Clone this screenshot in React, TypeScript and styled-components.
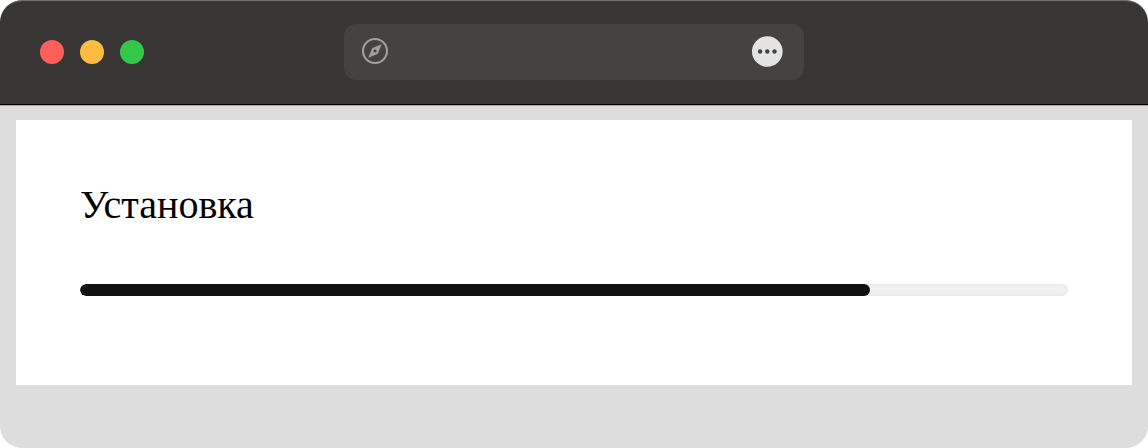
import React from "react";
import styled, { createGlobalStyle } from "styled-components";

const GlobalStyle = createGlobalStyle`
  * { box-sizing: border-box; }
  body { margin: 0; background: #fff; }
`;

const Window = styled.div`
  min-height: 100vh;
  border-radius: 22px;
  overflow: hidden;
  background: #ddd;
`;

const TitleBar = styled.header`
  display: grid;
  grid-template-columns: 1fr minmax(0, 460px) 1fr;
  align-items: center;
  padding: 24px 40px;
  background: #373634;
  border-bottom: 1px solid #000;
  border-radius: 22px 22px 0 0;
  box-shadow: inset 0 2px 1px -1px #777674, 0 1px 0 #aaa;
`;

const WindowControls = styled.div`
  display: flex;
  gap: 16px;
`;

const ControlButton = styled.button<{ $color: string }>`
  width: 24px;
  height: 24px;
  padding: 0;
  border: 0;
  border-radius: 50%;
  background: ${({ $color }) => $color};
`;

const AddressBar = styled.div`
  display: flex;
  align-items: center;
  height: 56px;
  padding: 0 21px 0 17px;
  border-radius: 12px;
  background: #444341;
`;

const AddressInput = styled.input`
  flex: 1;
  min-width: 0;
  border: 0;
  outline: 0;
  background: transparent;
  color: #e5e5e5;
  font: 24px "Liberation Sans", sans-serif;
`;

const MenuButton = styled.button`
  display: flex;
  padding: 0;
  border: 0;
  background: transparent;
`;

const Page = styled.main`
  margin: 15px 16px 63px;
  padding: 64px 64px 89px;
  background: #fff;
`;

const Title = styled.label`
  display: block;
  margin-bottom: 58px;
  color: #000;
  font: 40px/42px "Liberation Serif", serif;
`;

const Progress = styled.progress`
  display: block;
  width: 100%;
  height: 12px;
  appearance: none;
  border: 0;
  border-radius: 6px;
  overflow: hidden;
  background: #f1f1f1;

  &::-webkit-progress-bar {
    border-radius: 6px;
    background: #f1f1f1;
    box-shadow: inset 0 0 4px #e2e2e2;
  }
  &::-webkit-progress-value {
    border-radius: 6px;
    background: #111;
  }
  &::-moz-progress-bar {
    border-radius: 6px;
    background: #111;
  }
`;

const controls = [
  { label: "Закрыть", color: "#ff5f5a" },
  { label: "Свернуть", color: "#ffbc40" },
  { label: "Развернуть", color: "#34c84a" },
];

const CompassIcon = () => (
  <svg width="28" height="28" viewBox="0 0 28 28" aria-hidden="true">
    <circle cx="14" cy="13" r="12" fill="none" stroke="#a2a19f" strokeWidth="2" />
    <path
      fill="#a2a19f"
      fillRule="evenodd"
      stroke="#a2a19f"
      strokeWidth="0.4"
      strokeLinejoin="round"
      d="M20.4 6.6 11.4 10.2 7.6 19.4 16.6 15.8ZM14 11.2a1.8 1.8 0 1 1 0 3.6 1.8 1.8 0 0 1 0-3.6Z"
    />
  </svg>
);

const MoreIcon = () => (
  <svg width="31" height="32" viewBox="0 0 31 32" aria-hidden="true">
    <circle cx="15.3" cy="15.5" r="15.3" fill="#e3e3e3" />
    <g fill="#444341">
      <circle cx="8.1" cy="15.5" r="2.2" />
      <circle cx="15.3" cy="15.5" r="2.2" />
      <circle cx="22.5" cy="15.5" r="2.2" />
    </g>
  </svg>
);

export default function App() {
  return (
    <>
      <GlobalStyle />
      <Window>
        <TitleBar>
          <WindowControls>
            {controls.map(({ label, color }) => (
              <ControlButton key={label} type="button" aria-label={label} $color={color} />
            ))}
          </WindowControls>
          <AddressBar>
            <CompassIcon />
            <AddressInput type="text" aria-label="Адрес" />
            <MenuButton type="button" aria-label="Меню">
              <MoreIcon />
            </MenuButton>
          </AddressBar>
        </TitleBar>
        <Page>
          <Title htmlFor="install-progress">Установка</Title>
          <Progress id="install-progress" max={100} value={80} />
        </Page>
      </Window>
    </>
  );
}
